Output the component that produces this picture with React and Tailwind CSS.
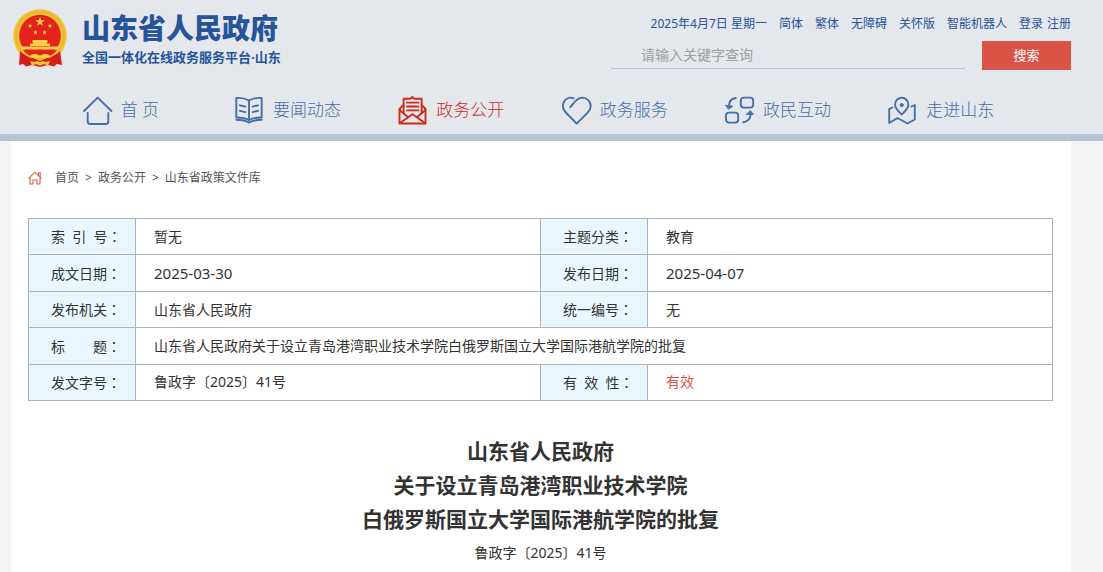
import React from 'react';

const topLinks = ['简体', '繁体', '无障碍', '关怀版', '智能机器人'];

const HomeIcon = () => (
  <>
    <path d="M1 16 14.7 2.6 28.4 16" />
    <path d="M4.7 18v8.5q0 2.5 2.5 2.5h15.6q2.5 0 2.5-2.5V18" />
  </>
);

const BookIcon = () => (
  <>
    <path d="M14 5.5Q8.5 2.4 1.3 3v19.5Q9 22.3 14 25q5-2.7 12.7-2.5V3Q19.5 2.4 14 5.5Z" />
    <path d="M14 5.5V25" />
    <path d="M1.3 24.8Q9.5 25 14 27.6q4.5-2.6 12.7-2.8" />
    <path d="m5 10.3 5.3 1.4M5 15.8l5.3 1.4M23 10.3l-5.3 1.4M23 15.8l-5.3 1.4" />
  </>
);

const LetterIcon = () => (
  <>
    <path d="M5.6 10 1.5 14v14.5h26V14l-3.8-4" />
    <path d="M5.6 18V3.7h6.7L14.3 2l2 1.7h7.4V18" />
    <path d="M9 7.6h11.5M9 11.5h11.5M9 15.4h11.5" />
    <path d="M2 28 14.5 19.2 27 28M1.5 15l8.3 7M27.5 15l-8.3 7" />
  </>
);

const HeartIcon = () => (
  <path d="M8.3 12.2C12 8 14.5 2.8 20 2.6c5 0 8.7 4 8.7 8.5 0 3-1.3 4.7-3 6.5L14.7 28.6 3.8 17.5C2 15.7.9 13.7.9 11 .9 6 4.8 2.6 8.8 2.6q1.5 0 2.8.7" />
);

const SwapIcon = () => (
  <>
    <rect x="15.8" y="2.6" width="12.4" height="10" rx="3" />
    <rect x="1" y="17.6" width="12.2" height="10" rx="3" />
    <path d="M10.8 3Q3.9 4 4 11" />
    <path d="M.8 10.3 7.8 11.3 3.8 14Z" fill="currentColor" strokeWidth="1" />
    <path d="M18.3 27.3Q25.6 26 25.6 19" />
    <path d="M21.5 19.4h7L25.6 16Z" fill="currentColor" strokeWidth="1" />
  </>
);

const MapIcon = () => (
  <>
    <path d="M13.7 19.6C10 16 7 13.5 7 9.5a6.7 6.7 0 0 1 13.4 0c0 4-3 6.5-6.7 10.1Z" />
    <circle cx="13.7" cy="10" r="1.6" fill="currentColor" strokeWidth="1" />
    <path d="M4.3 12.5 1.2 14.2V28l8.3-5 10 5.5 7.3-4V10l-3.3 1.5" />
  </>
);

const navItems = [
  { label: '首 页', Icon: HomeIcon },
  { label: '要闻动态', Icon: BookIcon },
  { label: '政务公开', Icon: LetterIcon, active: true },
  { label: '政务服务', Icon: HeartIcon },
  { label: '政民互动', Icon: SwapIcon },
  { label: '走进山东', Icon: MapIcon },
];

const star = '0,-10 2.4,-3.2 9.5,-3.1 3.8,1.2 5.9,8.1 0,4 -5.9,8.1 -3.8,1.2 -9.5,-3.1 -2.4,-3.2';

function Emblem() {
  return (
    <svg viewBox="0 0 54 60" className="h-[60px] w-[54px] shrink-0" aria-hidden="true">
      <circle cx="27" cy="27" r="26.8" fill="#f3c136" />
      <circle cx="27" cy="27" r="24" fill="none" stroke="#dca427" strokeWidth="1.2" opacity="0.5" />
      <circle cx="27" cy="26.5" r="20.8" fill="#e4231c" />
      <g fill="#f8d048">
        <polygon points={star} transform="translate(27 12.8) scale(.5)" />
        <polygon points={star} transform="translate(17 17) scale(.26)" />
        <polygon points={star} transform="translate(37 17) scale(.26)" />
        <polygon points={star} transform="translate(22.5 23.3) scale(.26)" />
        <polygon points={star} transform="translate(31.5 23.3) scale(.26)" />
        <path d="M20 31h14l1 2h-1v1.5h3V37H17v-2.5h3V33h-1Z" />
        <path d="M8 37.5h38l-2 3H10Z" />
      </g>
      <path d="M10 41h34q-4 5-9 6.500l-8-2-8 2Q14 46 10 41Z" fill="#e4231c" />
      <path d="M7 42q6 6 13 7l7 3 7-3q7-1 13-7l2 14-5-1-3 2.500-6-1.500-8 2-8-2-6 1.500L10 55l-4 1Z" fill="#d41f1a" />
      <path d="M16 48q3-4 7-3l4 1.500 4-1.500q4-1 7 3-6 2-11 .5-5 1.500-11-.5Z" fill="#f6c93c" />
      <path d="M17 52q5 1.500 7.500 0 2.500 2 5 0 2.500 1.500 7.500 0l-2 4.500-4.500-1.500-3.500 2-3.500-2-4.500 1.500Z" fill="#f3c136" />
    </svg>
  );
}

function Header() {
  return (
    <header className="border-b-[7px] border-[#b5c4d5] bg-[#e4e7ec] pl-[11px] pr-8 text-[#25549a]">
      <div className="flex h-[85px] justify-between">
        <a href="#" className="flex gap-[15px] pl-0.5 pt-[9px]">
          <Emblem />
          <span className="flex flex-col">
            <span className="text-[28px] font-black leading-[38px]">山东省人民政府</span>
            <span className="text-[13px] font-bold leading-5">全国一体化在线政务服务平台·山东</span>
          </span>
        </a>
        <div className="flex w-[460px] flex-col pt-[14px]">
          <div className="flex justify-end gap-3 whitespace-nowrap text-xs leading-5">
            <span>2025年4月7日 星期一</span>
            {topLinks.map((link) => (
              <a key={link} href="#">{link}</a>
            ))}
            <span className="flex gap-1">
              <a href="#">登录</a>
              <a href="#">注册</a>
            </span>
          </div>
          <form className="mt-[7px] flex h-[29px] gap-[17px]" onSubmit={(e) => e.preventDefault()}>
            <input
              type="text"
              aria-label="搜索关键字"
              placeholder="请输入关键字查询"
              className="h-7 min-w-0 flex-1 border-b border-[#b1c3dc] bg-transparent pl-[30px] text-sm outline-none placeholder:text-[#a0a0a0]"
            />
            <button type="submit" className="w-[89px] bg-[#da5445] text-[13px] text-white">
              搜索
            </button>
          </form>
        </div>
      </div>
      <nav className="grid h-[49px] grid-cols-6 pl-8 pr-12">
        {navItems.map(({ label, Icon, active }) => (
          <a
            key={label}
            href="#"
            className={`flex items-center justify-center gap-2 whitespace-nowrap text-[17px] font-light ${
              active ? 'text-[#cf2b1d]' : 'text-[#456fa5]'
            }`}
          >
            <svg
              viewBox="0 0 30 30"
              className="h-[30px] w-[30px] shrink-0"
              fill="none"
              stroke="currentColor"
              strokeWidth="1.9"
              strokeLinecap="round"
              strokeLinejoin="round"
              aria-hidden="true"
            >
              <Icon />
            </svg>
            <span className="min-w-[46px]">{label}</span>
          </a>
        ))}
      </nav>
    </header>
  );
}

function Breadcrumb() {
  return (
    <div className="flex h-6 items-center text-xs text-[#555555]">
      <svg viewBox="0 0 14 14" className="mr-[13px] h-[14px] w-[14px]" fill="none" stroke="#d9604f" strokeWidth="1.1" aria-hidden="true">
        <path d="M.5 7.5 7 1.2l6.5 6.300M10.5 4.200V1.800h1.700v4" />
        <path d="M2 7v6h3V9h4v4h3V7" />
      </svg>
      <a href="#">首页</a>
      <span className="px-1.5">&gt;</span>
      <a href="#">政务公开</a>
      <span className="px-1.5">&gt;</span>
      <a href="#">山东省政策文件库</a>
    </div>
  );
}

function Label({ children }) {
  return (
    <th scope="row" className="whitespace-pre border border-[#b2b2b2] bg-[#e8f7ff] pl-[22px] text-left font-normal">
      {children}
      <span className="font-['Noto_Sans_CJK_TC',sans-serif]">：</span>
    </th>
  );
}

function Value({ children, className = '', ...props }) {
  return (
    <td className={`border border-[#b2b2b2] pl-[18px] ${className}`} {...props}>
      {children}
    </td>
  );
}

function InfoTable() {
  return (
    <table className="h-[183px] w-full table-fixed border-collapse text-sm">
      <colgroup>
        <col className="w-[107px]" />
        <col />
        <col className="w-[107px]" />
        <col />
      </colgroup>
      <tbody>
        <tr>
          <Label>{'索\u00a0\u00a0引\u00a0\u00a0号'}</Label>
          <Value>暂无</Value>
          <Label>主题分类</Label>
          <Value>教育</Value>
        </tr>
        <tr>
          <Label>成文日期</Label>
          <Value className="text-[15px]">2025-03-30</Value>
          <Label>发布日期</Label>
          <Value className="text-[15px]">2025-04-07</Value>
        </tr>
        <tr>
          <Label>发布机关</Label>
          <Value>山东省人民政府</Value>
          <Label>统一编号</Label>
          <Value>无</Value>
        </tr>
        <tr>
          <Label>{'标\u3000\u3000题'}</Label>
          <Value colSpan={3}>山东省人民政府关于设立青岛港湾职业技术学院白俄罗斯国立大学国际港航学院的批复</Value>
        </tr>
        <tr>
          <Label>发文字号</Label>
          <Value>鲁政字〔2025〕41号</Value>
          <Label>{'有\u00a0\u00a0效\u00a0\u00a0性'}</Label>
          <Value className="text-[#da5445]">有效</Value>
        </tr>
      </tbody>
    </table>
  );
}

export default function App() {
  return (
    <div className="flex min-h-screen flex-col bg-[#f4f4f4] font-['Noto_Sans','Noto_Sans_CJK_SC',sans-serif] text-[#333333]">
      <Header />
      <div className="flex flex-1 pl-[11px] pr-8">
        <main className="flex-1 bg-white pl-[17px] pr-[18px] pt-[25px]">
          <Breadcrumb />
          <div className="mt-7">
            <InfoTable />
          </div>
          <article className="mt-[33px] text-center">
            <h1 className="text-[21px] font-bold leading-[34px]">
              山东省人民政府
              <br />
              关于设立青岛港湾职业技术学院
              <br />
              白俄罗斯国立大学国际港航学院的批复
            </h1>
            <p className="text-sm leading-[34px]">鲁政字〔2025〕41号</p>
          </article>
        </main>
      </div>
    </div>
  );
}
